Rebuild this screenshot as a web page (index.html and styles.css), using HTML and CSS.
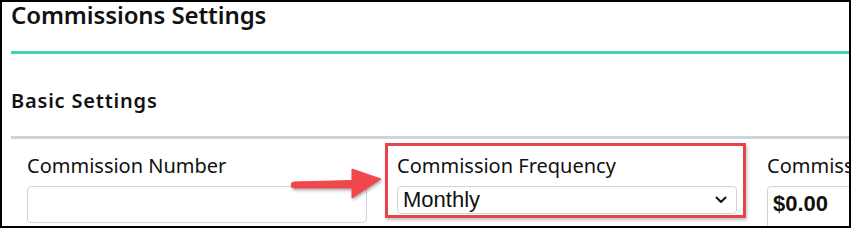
FILE: index.html
```html
<!DOCTYPE html>
<html lang="en">
<head>
    <meta charset="UTF-8">
    <title>Commissions Settings</title>
    <link rel="stylesheet" href="styles.css">
</head>
<body>
    <div class="frame">
        <!-- Page title -->
        <div class="page-header">
            <h1>Commissions Settings</h1>
        </div>

        <!-- Basic settings section -->
        <div class="section">
            <h2 class="section-title">Basic Settings</h2>
            <div class="fields">
                <div class="field">
                    <label>Commission Number</label>
                    <div class="text-input"></div>
                </div>
                <div class="field field-marked">
                    <label>Commission Frequency</label>
                    <div class="select-input">
                        <span>Monthly</span>
                        <svg class="chevron" width="12" height="8" viewBox="0 0 12 8">
                            <path d="M1.5 1.5 L6 6 L10.5 1.5" fill="none" stroke="#111" stroke-width="2" stroke-linecap="round" stroke-linejoin="round"/>
                        </svg>
                    </div>
                    <!-- Annotation: red box and arrow -->
                    <div class="mark-box"></div>
                    <svg class="mark-arrow" width="100" height="40" viewBox="0 0 100 40">
                        <path d="M5 18 L63 16.5 L63 5 L92 15 L63 34 L63 24 L5 24 Z" fill="#f0474d" stroke="#f0474d" stroke-width="1" stroke-linejoin="round"/>
                        <circle cx="5" cy="21" r="3.2" fill="#f0474d"/>
                    </svg>
                </div>
                <div class="field">
                    <label>Commission Rate</label>
                    <div class="text-input money">$0.00</div>
                </div>
            </div>
        </div>
    </div>
</body>
</html>
```

FILE: styles.css
```css
body {
    margin: 0;
    font-family: 'Noto Sans', 'Lato', sans-serif;
    color: #111;
    background: #fff;
}

/* Рамка скриншота */
.frame {
    width: 851px;
    height: 228px;
    box-sizing: border-box;
    border: 2px solid #000;
    display: flex;
    flex-direction: column;
}

/* Заголовок страницы */
.page-header {
    padding: 0 0 0 9px;
}

.page-header h1 {
    margin: 0;
    padding: 0;
    height: 49px;
    font-size: 24px;
    font-weight: 600;
    line-height: 26px;
    letter-spacing: -0.1px;
    border-bottom: 3px solid #41d1b8;
}

/* Секция */
.section {
    flex: 1;
    min-height: 0;
    overflow: hidden;
    padding-left: 9px;
}

.section-title {
    margin: 0;
    padding-top: 35px;
    height: 47px;
    font-size: 20px;
    font-weight: 600;
    line-height: 24px;
    letter-spacing: 0.8px;
    border-bottom: 3px solid #ccd3da;
}

.fields {
    display: flex;
    gap: 30px;
    padding: 0 0 0 16px;
}

.field {
    width: 340px;
    flex-shrink: 0;
    position: relative;
    padding-top: 15px;
}

.field label {
    display: block;
    font-size: 20px;
    line-height: 24px;
    height: 32px;
    white-space: nowrap;
}

.text-input {
    box-sizing: border-box;
    height: 37px;
    border: 1px solid #cfd3d8;
    border-radius: 4px;
    background: #fff;
}

.text-input.money {
    height: 44px;
    padding: 4px 5px;
    font-family: 'Liberation Sans', Arial, sans-serif;
    font-size: 22px;
    font-weight: 700;
    line-height: 26px;
}

.select-input {
    box-sizing: border-box;
    height: 28px;
    border: 1px solid #cfd3d8;
    border-radius: 4px;
    display: flex;
    align-items: center;
    justify-content: space-between;
    padding: 0 9px 0 5px;
    font-family: 'Liberation Sans', Arial, sans-serif;
    font-size: 22px;
}

.chevron {
    display: block;
}

/* Красная рамка выделения */
.mark-box {
    position: absolute;
    left: -12px;
    top: 4px;
    width: 361px;
    height: 75px;
    box-sizing: border-box;
    border: 3px solid #e8434a;
    box-shadow: 1px 2px 3px rgba(0, 0, 0, 0.25);
    pointer-events: none;
}

/* Стрелка */
.mark-arrow {
    position: absolute;
    left: -108px;
    top: 25px;
    filter: drop-shadow(1px 2px 1.5px rgba(0, 0, 0, 0.3));
}
```
